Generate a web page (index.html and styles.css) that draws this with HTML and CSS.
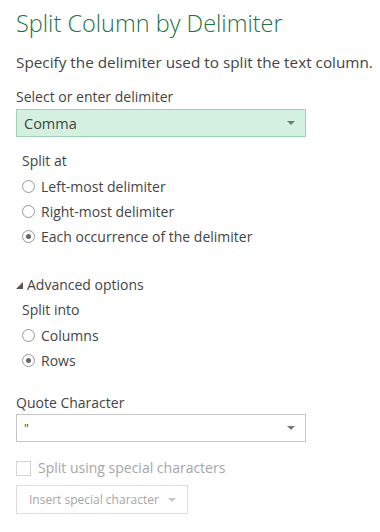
FILE: index.html
```html
<!DOCTYPE html>
<html lang="en">
<head>
    <meta charset="UTF-8">
    <title>Split Column by Delimiter</title>
    <link rel="stylesheet" href="styles.css">
</head>
<body>
    <h1>Split Column by Delimiter</h1>
    <p class="intro">Specify the delimiter used to split the text column.</p>

    <div class="field">
        <label class="field-label">Select or enter delimiter</label>
        <div class="combo combo-active">
            <span>Comma</span>
            <span class="caret"></span>
        </div>
    </div>

    <div class="group">
        <div class="group-label">Split at</div>
        <div class="radio"><span class="dot"></span>Left-most delimiter</div>
        <div class="radio"><span class="dot"></span>Right-most delimiter</div>
        <div class="radio"><span class="dot checked"></span>Each occurrence of the delimiter</div>
    </div>

    <div class="advanced">
        <svg class="expander" width="7" height="7" viewBox="0 0 7 7"><polygon points="7,0 7,7 0,7" fill="#555"/></svg>
        Advanced options
    </div>

    <div class="group group-tight">
        <div class="group-label">Split into</div>
        <div class="radio"><span class="dot"></span>Columns</div>
        <div class="radio"><span class="dot checked"></span>Rows</div>
    </div>

    <div class="field quote">
        <label class="field-label">Quote Character</label>
        <div class="combo">
            <span class="quote-char">"</span>
            <span class="caret"></span>
        </div>
    </div>

    <div class="check disabled"><span class="box"></span>Split using special characters</div>
    <div class="insert-btn">Insert special character <span class="caret light"></span></div>
</body>
</html>
```

FILE: styles.css
```css
body {
    margin: 0;
    padding: 0 16px;
    font-family: "Open Sans", "Noto Sans", sans-serif;
    font-size: 14px;
    color: #444;
    background: #fff;
}

h1 {
    margin: 8px 0 0;
    font-weight: 300;
    font-size: 23.5px;
    line-height: 30px;
    color: #217346;
}

.intro {
    margin: 14px 0 0;
    font-size: 15.3px;
    line-height: 20px;
    white-space: nowrap;
}

.field {
    margin-top: 15px;
}

.field-label {
    display: block;
    line-height: 20px;
}

.combo {
    margin-top: 2px;
    height: 26px;
    border: 1px solid #c6c6c6;
    display: flex;
    align-items: center;
    justify-content: space-between;
    padding: 0 10px 0 7px;
    box-sizing: content-box;
    width: 271px;
    font-size: 14.5px;
}

.combo-active {
    background: #d3f0e0;
    border-color: #9ed4b5;
}

.caret {
    width: 0;
    height: 0;
    border-left: 4px solid transparent;
    border-right: 4px solid transparent;
    border-top: 4px solid #777;
}

.caret.light {
    border-top-color: #c8c8c8;
    margin-left: 9px;
}

.group {
    margin-top: 14px;
    padding-left: 6px;
}

.group-tight {
    margin-top: 5px;
}

.group-label {
    line-height: 20px;
    margin-bottom: 3px;
}

.radio {
    display: flex;
    align-items: center;
    height: 25px;
}

.dot {
    width: 11px;
    height: 11px;
    border: 1px solid #999;
    border-radius: 50%;
    margin-right: 6px;
    display: flex;
    align-items: center;
    justify-content: center;
}

.dot.checked::after {
    content: "";
    width: 5px;
    height: 5px;
    border-radius: 50%;
    background: #666;
}

.advanced {
    margin-top: 26px;
    line-height: 20px;
    display: flex;
    align-items: center;
}

.expander {
    margin-right: 4px;
    margin-top: 1px;
}

.quote {
    margin-top: 20px;
}

.quote .combo {
    margin-top: 1px;
}

.quote-char {
    font-size: 12px;
}

.check {
    margin-top: 16px;
    display: flex;
    align-items: center;
    line-height: 20px;
}

.disabled {
    color: #a6a6a6;
}

.box {
    width: 13px;
    height: 13px;
    border: 1px solid #d4d4d4;
    margin-right: 7px;
}

.insert-btn {
    margin-top: 7px;
    display: inline-flex;
    align-items: center;
    height: 27px;
    padding: 0 11px 0 12px;
    border: 1px solid #dcdcdc;
    color: #a6a6a6;
    font-size: 12px;
}
```
